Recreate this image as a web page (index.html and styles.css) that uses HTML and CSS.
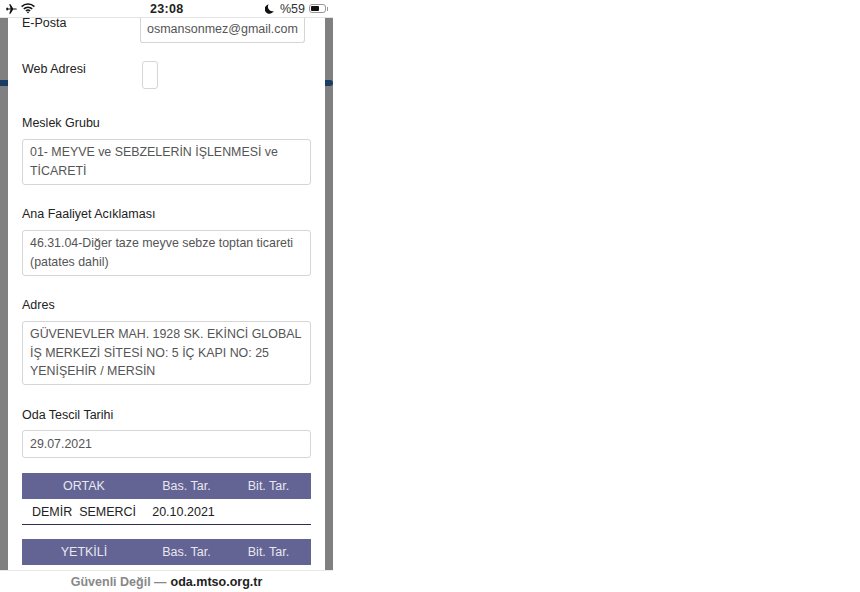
FILE: index.html
```html
<!DOCTYPE html>
<html lang="en">
<head>
    <meta charset="UTF-8">
    <meta name="viewport" content="width=device-width, initial-scale=1.0">
    <title>Firma Bilgileri</title>
    <link rel="stylesheet" href="styles.css">
</head>
<body>
    <div class="phone">
        <div class="status-bar">
            <div class="status-left">
                <svg class="icon-plane" width="11" height="10" viewBox="0 0 11 10"><path d="M0 5 L1 3.3 L2.4 4.4 L4.6 4.4 L3.2 0.3 L4.5 0.3 L7.2 4.4 L9.4 4.4 C10.4 4.4 11 4.7 11 5 C11 5.3 10.4 5.6 9.4 5.6 L7.2 5.6 L4.5 9.7 L3.2 9.7 L4.6 5.6 L2.4 5.6 L1 6.7 Z" fill="#111"/></svg>
                <svg class="icon-wifi" width="14" height="11" viewBox="0 0 14 11"><path d="M0.6 3.6 A9.2 9.2 0 0 1 13.4 3.6 M2.8 5.9 A6 6 0 0 1 11.2 5.9 M4.9 8 A3 3 0 0 1 9.1 8" fill="none" stroke="#111" stroke-width="1.5"/><path d="M5.8 9 L7 10.6 L8.2 9 A1.8 1.8 0 0 0 5.8 9 Z" fill="#111"/></svg>
            </div>
            <div class="status-time">23:08</div>
            <div class="status-right">
                <svg class="icon-moon" width="9" height="10" viewBox="0 0 9 10"><path d="M3.6 0.4 A4.7 4.7 0 1 0 8.7 6.9 A4.4 4.4 0 0 1 3.6 0.4 Z" fill="#111"/></svg>
                <span class="battery-text">%59</span>
                <div class="battery"><div class="battery-level" style="width: 59%;"></div></div>
                <div class="battery-cap"></div>
            </div>
        </div>

        <div class="backdrop">
            <span class="behind-dot behind-left"></span>
            <span class="behind-dot behind-right"></span>
            <div class="modal">
                <div class="row row-email">
                    <label class="row-label">E-Posta</label>
                    <div class="input input-short">osmansonmez@gmail.com</div>
                </div>
                <div class="row row-web">
                    <label class="row-label">Web Adresi</label>
                    <div class="input input-empty"></div>
                </div>

                <div class="field">
                    <label class="field-label">Meslek Grubu</label>
                    <div class="input">01- MEYVE ve SEBZELERİN İŞLENMESİ ve TİCARETİ</div>
                </div>
                <div class="field">
                    <label class="field-label">Ana Faaliyet Acıklaması</label>
                    <div class="input">46.31.04-Diğer taze meyve sebze toptan ticareti (patates dahil)</div>
                </div>
                <div class="field">
                    <label class="field-label">Adres</label>
                    <div class="input">GÜVENEVLER MAH. 1928 SK. EKİNCİ GLOBAL İŞ MERKEZİ SİTESİ NO: 5 İÇ KAPI NO: 25 YENİŞEHİR / MERSİN</div>
                </div>
                <div class="field field-last">
                    <label class="field-label">Oda Tescil Tarihi</label>
                    <div class="input">29.07.2021</div>
                </div>

                <div class="table-head">
                    <div class="col-name">ORTAK</div>
                    <div class="col-start">Bas. Tar.</div>
                    <div class="col-end">Bit. Tar.</div>
                </div>
                <div class="table-row">
                    <div class="col-name">DEMİR&nbsp; SEMERCİ</div>
                    <div class="col-start">20.10.2021</div>
                    <div class="col-end"></div>
                </div>
                <div class="table-head">
                    <div class="col-name">YETKİLİ</div>
                    <div class="col-start">Bas. Tar.</div>
                    <div class="col-end">Bit. Tar.</div>
                </div>
            </div>
        </div>

        <div class="address-bar">
            <span class="not-secure">Güvenli Değil —</span>
            <span class="domain">oda.mtso.org.tr</span>
        </div>
    </div>
</body>
</html>
```

FILE: styles.css
```css
body {
    margin: 0;
    background-color: white;
    font-family: "Liberation Sans", Arial, sans-serif;
    font-size: 13px;
    color: #222;
}

.phone {
    width: 333px;
    height: 592px;
    display: flex;
    flex-direction: column;
    overflow: hidden;
}

.status-bar {
    height: 17px;
    flex: none;
    display: flex;
    align-items: center;
    justify-content: space-between;
    padding: 0 5px 0 6px;
    border-bottom: 1px solid #e4e4e4;
    background-color: white;
    position: relative;
}

.status-left {
    display: flex;
    align-items: center;
    gap: 4px;
}

.status-time {
    position: absolute;
    left: 150px;
    top: 2px;
    font-size: 12.5px;
    font-weight: bold;
    color: #222;
    letter-spacing: 0.3px;
}

.status-right {
    display: flex;
    align-items: center;
    color: #333;
    font-size: 12.5px;
}

.icon-moon {
    margin-right: 6px;
}

.battery-text {
    margin-right: 4px;
}

.battery {
    width: 17px;
    height: 9px;
    box-sizing: border-box;
    border: 1px solid #999;
    border-radius: 3px;
    padding: 1px;
}

.battery-level {
    height: 100%;
    background-color: #111;
    border-radius: 1px;
}

.battery-cap {
    width: 1px;
    height: 4px;
    margin-left: 1px;
    background-color: #999;
}

.backdrop {
    flex: 1;
    min-height: 0;
    background-color: #808080;
    padding: 0 8px;
    position: relative;
}

.behind-dot {
    position: absolute;
    top: 62px;
    width: 8px;
    height: 6px;
    background-color: #1c3d63;
}

.behind-left {
    left: 0;
}

.behind-right {
    right: 0;
    border-radius: 0 3px 3px 0;
}

.modal {
    height: 100%;
    box-sizing: border-box;
    background-color: white;
    padding: 0 14px;
}

.row {
    display: flex;
    align-items: flex-start;
}

.row-email {
    height: 24px;
    margin-bottom: 19px;
}

.row-email .row-label {
    line-height: 11px;
}

.row-web {
    height: 28px;
    margin-bottom: 27px;
}

.row-web .row-label {
    margin-top: 1px;
}

.row-label {
    width: 118px;
    flex: none;
    color: #222;
    font-size: 12.5px;
    line-height: 15px;
}

.field {
    margin-bottom: 22.5px;
}

.field-last {
    margin-bottom: 15.5px;
}

.field-label {
    display: block;
    font-size: 12.5px;
    line-height: 15px;
    margin-bottom: 7.5px;
    color: #222;
}

.input {
    border: 1px solid #d5d5d5;
    border-radius: 3px;
    padding: 3.5px 5px 3.5px 7px;
    font-size: 12.4px;
    line-height: 18.5px;
    color: #555;
    background-color: white;
}

.input-short {
    width: 151px;
    border-top: none;
    border-radius: 0 0 3px 3px;
    padding: 2px 6px 3px;
    font-size: 12.5px;
    white-space: nowrap;
}

.input-empty {
    width: 14px;
    height: 26px;
    margin-left: 2px;
    padding: 0;
}

.table-head {
    height: 26px;
    display: flex;
    align-items: center;
    background-color: #636394;
    color: #e8e8f0;
    font-size: 12.5px;
    text-align: center;
}

.table-row {
    height: 26px;
    box-sizing: border-box;
    margin-bottom: 14px;
    display: flex;
    align-items: center;
    border-bottom: 1px solid #2c2c54;
    font-size: 12.5px;
    color: #222;
    text-align: center;
}

.table-row .col-start {
    padding-right: 6px;
    box-sizing: border-box;
}

.col-name {
    width: 124px;
}

.col-start {
    width: 81px;
}

.col-end {
    width: 83px;
}

.address-bar {
    height: 22px;
    flex: none;
    display: flex;
    align-items: center;
    justify-content: center;
    gap: 4px;
    font-size: 12.5px;
    background-color: white;
    border-top: 1px solid #e8e8e8;
    box-sizing: border-box;
}

.not-secure {
    color: #888;
    font-weight: bold;
}

.domain {
    color: #222;
    font-weight: bold;
}
```
